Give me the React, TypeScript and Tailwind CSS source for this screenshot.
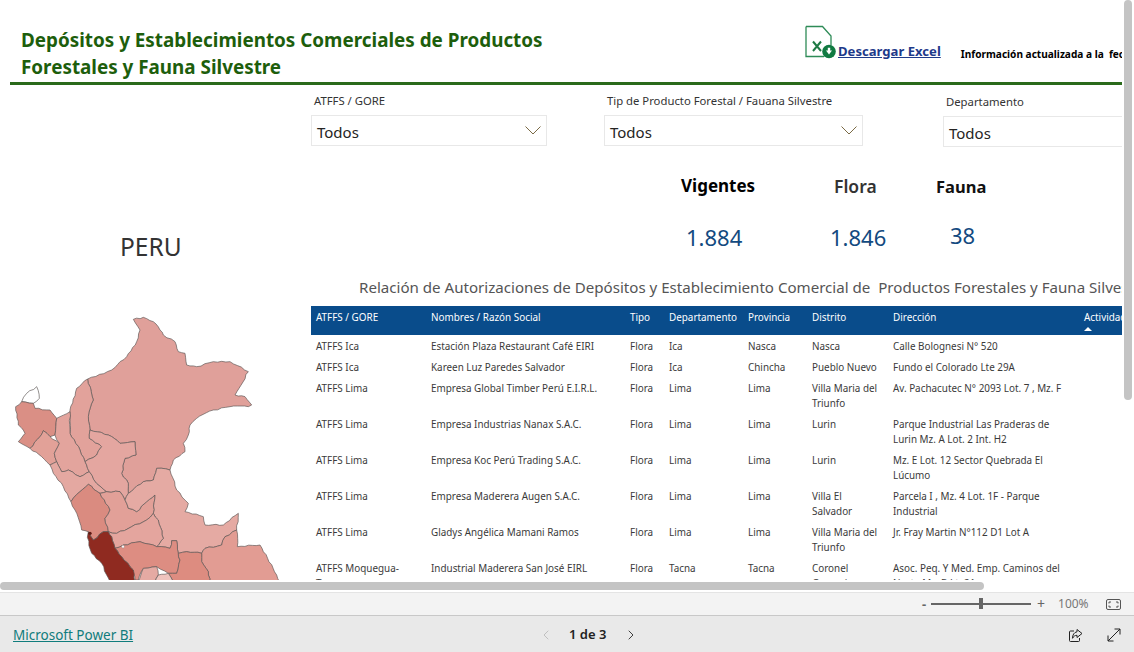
import { ChevronLeft, ChevronRight } from "lucide-react";

const FONT = "font-['Noto_Sans','Open_Sans',sans-serif]";

type Pt = [number, number];

// small wobble on every edge so the borders look like a real map; same hash both ways so neighbours share a border
function rough(points: Pt[]) {
  const out: Pt[] = [];
  points.forEach((p, i) => {
    const q = points[(i + 1) % points.length];
    const [a, b] = p[0] < q[0] || (p[0] === q[0] && p[1] < q[1]) ? [p, q] : [q, p];
    const seed = a[0] * 13 + a[1] * 7 + b[0] * 3 + b[1] * 11;
    const dx = b[0] - a[0];
    const dy = b[1] - a[1];
    const len = Math.hypot(dx, dy) || 1;
    const steps = Math.max(1, Math.round(len / 12));
    out.push(p);
    const forward = p === a;
    const mids: Pt[] = [];
    for (let s = 1; s < steps; s++) {
      const off = ((seed * (s + 3) * 37) % 9) - 4;
      const t = s / steps;
      mids.push([a[0] + dx * t - (dy / len) * off * 0.5, a[1] + dy * t + (dx / len) * off * 0.5]);
    }
    out.push(...(forward ? mids : mids.reverse()));
  });
  return "M" + out.map((p) => p[0].toFixed(1) + " " + p[1].toFixed(1)).join("L") + "Z";
}

const REGIONS: { fill: string; pts: Pt[] }[] = [
  { fill: "#e0a09a", pts: [[400,58],[430,52],[460,65],[480,90],[490,105],[525,125],[535,155],[555,160],[560,195],[590,200],[640,185],[690,185],[745,215],[705,285],[735,290],[755,315],[745,320],[690,320],[640,330],[590,355],[570,375],[565,405],[550,430],[555,455],[520,480],[510,510],[470,505],[460,540],[430,545],[385,580],[385,550],[365,520],[375,475],[408,465],[405,425],[360,430],[325,405],[270,390],[265,350],[280,300],[263,237],[335,210],[380,170],[410,125],[420,90]] },
  { fill: "#e2a29b", pts: [[263,237],[280,300],[265,350],[270,390],[268,415],[305,440],[290,465],[255,485],[240,450],[210,400],[210,330],[230,265]] },
  { fill: "#ffffff", pts: [[65,305],[80,280],[110,260],[118,295],[100,310]] },
  { fill: "#da8f85", pts: [[47,320],[65,305],[100,310],[105,325],[150,330],[170,355],[165,405],[150,410],[130,392],[120,410],[90,445],[55,425],[75,400],[55,375]] },
  { fill: "#e2a198", pts: [[90,445],[120,410],[130,392],[150,410],[178,430],[163,460],[170,485],[150,495],[125,470]] },
  { fill: "#e3a49d", pts: [[170,355],[210,335],[210,400],[240,450],[255,485],[268,515],[240,530],[205,510],[185,515],[170,485],[163,460],[178,430],[165,405]] },
  { fill: "#e4a8a1", pts: [[150,495],[170,485],[185,515],[205,510],[240,530],[268,515],[290,550],[320,575],[300,580],[265,553],[240,575],[213,605],[190,560],[160,520]] },
  { fill: "#e4a6a0", pts: [[270,390],[325,405],[360,430],[405,425],[408,465],[375,475],[365,520],[385,550],[385,580],[375,600],[360,575],[320,575],[290,550],[268,515],[255,485],[290,465],[305,440],[268,415]] },
  { fill: "#da8b80", pts: [[213,605],[240,575],[265,553],[300,580],[330,630],[315,655],[325,695],[310,695],[280,720],[265,695],[245,690],[225,630]] },
  { fill: "#e2a098", pts: [[300,580],[320,575],[360,575],[375,600],[385,625],[410,635],[440,605],[465,585],[460,640],[440,660],[395,680],[350,700],[325,695],[315,655],[330,630]] },
  { fill: "#e5aaa3", pts: [[385,580],[430,545],[460,540],[470,505],[510,510],[530,570],[565,610],[555,635],[610,650],[615,675],[670,675],[715,640],[710,690],[675,710],[665,735],[615,745],[605,760],[560,755],[535,760],[530,722],[515,722],[510,745],[470,740],[490,715],[475,660],[460,640],[465,585],[440,605],[410,635],[385,625],[375,600]] },
  { fill: "#e4a59e", pts: [[325,695],[350,700],[395,680],[440,660],[460,640],[475,660],[490,715],[470,740],[420,725],[370,735],[345,745],[335,710]] },
  { fill: "#dd8d82", pts: [[345,745],[370,735],[420,725],[470,740],[510,745],[515,722],[530,722],[535,760],[540,780],[530,820],[505,820],[470,800],[430,805],[415,840],[405,840],[400,810],[365,770]] },
  { fill: "#8f2a20", pts: [[262,712],[265,695],[280,720],[310,695],[325,695],[335,710],[345,745],[365,770],[400,810],[405,845],[330,845],[305,790],[275,760]] },
  { fill: "#e29c93", pts: [[615,745],[665,735],[675,710],[710,690],[712,740],[780,735],[830,825],[838,845],[630,845],[625,815],[605,785],[605,760]] },
  { fill: "#dd8c80", pts: [[535,760],[560,755],[605,760],[605,785],[625,815],[630,845],[520,845],[505,820],[530,820],[540,780]] },
  { fill: "#e5aaa3", pts: [[415,845],[430,805],[470,800],[475,825],[465,845]] },
  { fill: "#efc3bd", pts: [[465,845],[475,825],[505,820],[520,845]] },
];

function PeruMap() {
  return (
    <svg viewBox="0 0 900 840" className="h-[280px] w-[300px] shrink-0">
      {REGIONS.map((r, i) => (
        <path key={i} d={rough(r.pts)} fill={r.fill} stroke="#5c5655" strokeWidth="2" strokeLinejoin="round" />
      ))}
      <circle cx="270" cy="700" r="5" fill="#5e1a14" />
      <circle cx="369" cy="740" r="4" fill="#fff" stroke="#777" strokeWidth="1" />
    </svg>
  );
}

function ExcelIcon() {
  return (
    <svg width="32" height="34" viewBox="0 0 32 34" className="shrink-0" fill="none">
      <path d="M1 1.5H17.5L26 11V20M1 1.5V31.5H19" stroke="#2e8b57" strokeWidth="1.3" />
      <path d="M8 16.5L16 26M16 16.5L8 26" stroke="#1f7a45" strokeWidth="2" />
      <circle cx="24" cy="26.5" r="6.8" fill="#107a41" />
      <path d="M21 25.5H27L24 29.5Z M22.8 22.8H25.2V26H22.8Z" fill="#fff" />
    </svg>
  );
}

function Filter({ label, width, open }: { label: string; width: string; open?: boolean }) {
  return (
    <div className={width}>
      <div className="h-[22px] whitespace-nowrap pl-[3px] text-[11.3px] leading-[16px] text-[#333]">{label}</div>
      <div className="flex h-[31px] items-center justify-between border border-[#e8e8e8] pl-[5px] pr-[5px]">
        <span className="pt-[2px] text-[15px] leading-[22px] text-[#252423]">Todos</span>
        {open && (
          <svg width="16" height="9" viewBox="0 0 16 9" fill="none">
            <path d="M0.5 0.5L8 8L15.5 0.5" stroke="#7a6a45" strokeWidth="1" />
          </svg>
        )}
      </div>
    </div>
  );
}

const ROWS = [
  ["ATFFS Ica", "Estación Plaza Restaurant Café EIRI", "Flora", "Ica", "Nasca", "Nasca", "Calle Bolognesi N° 520"],
  ["ATFFS Ica", "Kareen Luz Paredes Salvador", "Flora", "Ica", "Chincha", "Pueblo Nuevo", "Fundo el Colorado Lte 29A"],
  ["ATFFS Lima", "Empresa Global Timber Perú E.I.R.L.", "Flora", "Lima", "Lima", "Villa Maria del\nTriunfo", "Av. Pachacutec N° 2093 Lot. 7 , Mz. F"],
  ["ATFFS Lima", "Empresa Industrias Nanax S.A.C.", "Flora", "Lima", "Lima", "Lurin", "Parque Industrial Las Praderas de\nLurin Mz. A Lot. 2 Int. H2"],
  ["ATFFS Lima", "Empresa Koc Perú Trading S.A.C.", "Flora", "Lima", "Lima", "Lurin", "Mz. E Lot. 12 Sector Quebrada El\nLúcumo"],
  ["ATFFS Lima", "Empresa Maderera Augen S.A.C.", "Flora", "Lima", "Lima", "Villa El\nSalvador", "Parcela I , Mz. 4 Lot. 1F - Parque\nIndustrial"],
  ["ATFFS Lima", "Gladys Angélica Mamani Ramos", "Flora", "Lima", "Lima", "Villa Maria del\nTriunfo", "Jr. Fray Martin N°112 D1 Lot A"],
  ["ATFFS Moquegua-\nTacna", "Industrial Maderera San José EIRL", "Flora", "Tacna", "Tacna", "Coronel\nGregorio", "Asoc. Peq. Y Med. Emp. Caminos del\nNorte Mz. B Lt. 21"],
];

const HEAD = ["ATFFS / GORE", "Nombres / Razón Social", "Tipo", "Departamento", "Provincia", "Distrito", "Dirección"];
const COLS = "grid grid-cols-[115px_199px_39px_79px_64px_81px_191px_60px]";

function DataTable() {
  return (
    <div className="h-[274px] overflow-hidden text-[9.9px] leading-[15px]">
      <div className={`${COLS} h-[29px] bg-[#094c8b] pl-[5px] pt-[4px] text-white`}>
        {HEAD.map((h) => (
          <div key={h} className="whitespace-nowrap">{h}</div>
        ))}
        <div className="relative whitespace-nowrap">
          Actividad
          <span className="absolute left-0 top-[17px] h-0 w-0 border-x-[4px] border-b-[4px] border-x-transparent border-b-white" />
        </div>
      </div>
      {ROWS.map((row, i) => (
        <div key={i} className={`${COLS} pl-[5px] pt-[4px] pb-[2px] text-[#3a3a3a]`}>
          {row.map((c, j) => (
            <div key={j} className="whitespace-pre">{c}</div>
          ))}
        </div>
      ))}
    </div>
  );
}

export default function App() {
  return (
    <div className={`${FONT} relative flex h-[652px] w-[1134px] flex-col overflow-hidden bg-white`}>
      <div className="h-[580px] w-[1122px] shrink-0 overflow-hidden">
        {/* encabezado */}
        <div className="flex h-[82px] items-start pl-[21px]">
          <h1 className="mt-[27px] w-[560px] shrink-0 whitespace-nowrap text-[18.85px] font-bold leading-[27px] text-[#1d5e0c]">
            Depósitos y Establecimientos Comerciales de Productos
            <br />
            Forestales y Fauna Silvestre
          </h1>
          <div className="ml-[224px] mt-[25px] flex shrink-0 items-end">
            <ExcelIcon />
            <a className="-mb-[1px] ml-px whitespace-nowrap text-[13.1px] font-bold leading-[18px] text-[#1e3a8a] underline">Descargar Excel</a>
          </div>
          <div className="ml-[20px] mt-[47px] shrink-0 whitespace-pre text-[10.1px] font-bold leading-[15px] text-black">
            Información actualizada a la  fecha
          </div>
        </div>
        <div className="ml-[10px] h-[3px] bg-[#2a6a1b]" />

        <div className="flex">
          <div className="flex w-[311px] shrink-0 flex-col">
            <div className="pl-[120px] pt-[146px] text-[24.5px] leading-[32px] text-[#333]">PERU</div>
            <div className="mt-[37px]">
              <PeruMap />
            </div>
          </div>

          <div className="min-w-0 flex-1">
            <div className="flex pt-[8px]">
              <Filter label="ATFFS / GORE" width="w-[236px] shrink-0" open />
              <Filter label="Tip de Producto Forestal / Fauana Silvestre" width="ml-[57px] w-[259px] shrink-0" open />
              <div className="ml-[80px] mt-px w-[200px] shrink-0">
                <Filter label="Departamento" width="w-full" />
              </div>
            </div>

            <div className="mt-[27px] flex">
              <div className="ml-[370px] w-[153px] text-[17px] font-bold leading-[24px] text-black">Vigentes</div>
              <div className="w-[102px] text-[17.5px] font-semibold leading-[24px] text-[#333]">Flora</div>
              <div className="mt-px text-[16.5px] font-bold leading-[24px] text-[#111]">Fauna</div>
            </div>
            <div className="mt-[22px] flex text-[22px] leading-[32px] text-[#134a80]">
              <div className="ml-[375px] w-[144px]">1.884</div>
              <div className="w-[120px]">1.846</div>
              <div className="-mt-[2px]">38</div>
            </div>

            <div className="mt-[23px] whitespace-pre pl-[48px] text-[15.1px] leading-[22px] text-[#555]">
              Relación de Autorizaciones de Depósitos y Establecimiento Comercial de  Productos Forestales y Fauna Silvestre
            </div>
            <div className="mt-[8px]">
              <DataTable />
            </div>
          </div>
        </div>
      </div>

      {/* barra de zoom */}
      <div className="mt-[12px] flex h-[23px] shrink-0 items-center border-t border-[#e4e4e4] bg-[#f3f3f3] pl-[922px] text-[#666]">
        <span className="w-[9px] text-[13px] font-bold leading-none">-</span>
        <div className="relative h-[2px] w-[100px] bg-[#666]">
          <span className="absolute left-[48px] top-[-5px] h-[11px] w-[4px] bg-[#666]" />
        </div>
        <span className="ml-[6px] text-[14px] leading-none">+</span>
        <span className="ml-[13px] text-[12px] leading-none text-[#777]">100%</span>
        <svg width="15" height="11" viewBox="0 0 15 11" fill="none" className="ml-[17px]" stroke="#555">
          <rect x="0.5" y="0.5" width="14" height="10" rx="1.5" />
          <path d="M3 4.5V3H5M10 3H12V4.5M12 6.5V8H10M5 8H3V6.5" />
        </svg>
      </div>

      {/* pie */}
      <div className="flex flex-1 items-center border-t border-[#c8c8c8] bg-[#e9e9e9] pl-[13px] pt-[2px] text-[13.5px]">
        <a className="mt-px w-[525px] text-[#107c7c] underline">Microsoft Power BI</a>
        <ChevronLeft size={16} strokeWidth={1.2} className="text-[#b5b5b5]" />
        <span className="ml-[15px] text-[13px] font-semibold text-[#222]">1 de 3</span>
        <ChevronRight size={16} strokeWidth={1.4} className="ml-[17px] text-[#333]" />
        <svg width="15" height="15" viewBox="0 0 15 15" fill="none" stroke="#222" className="ml-[429px]">
          <path d="M6 3H2.5A1 1 0 0 0 1.5 4V12.5A1 1 0 0 0 2.5 13.5H10.5A1 1 0 0 0 11.5 12.5V10" />
          <path d="M9 1.5L14 5.5L9 9.5V7.3C7 7.3 5.5 8.3 4.5 10.3C4.5 7 6 4.2 9 3.8Z" />
        </svg>
        <svg width="14" height="14" viewBox="0 0 14 14" fill="none" stroke="#222" className="ml-[24px]">
          <path d="M1 13L13 1M7.5 1H13V6.5M1 7.5V13H6.5" />
        </svg>
      </div>

      {/* scrollbars */}
      <div className="absolute left-0 top-[582px] h-[8px] w-[984px] rounded-full bg-[#c4c4c4]" />
      <div className="absolute left-[1124px] top-0 h-[400px] w-[8px] rounded-full bg-[#c4c4c4]" />
    </div>
  );
}
